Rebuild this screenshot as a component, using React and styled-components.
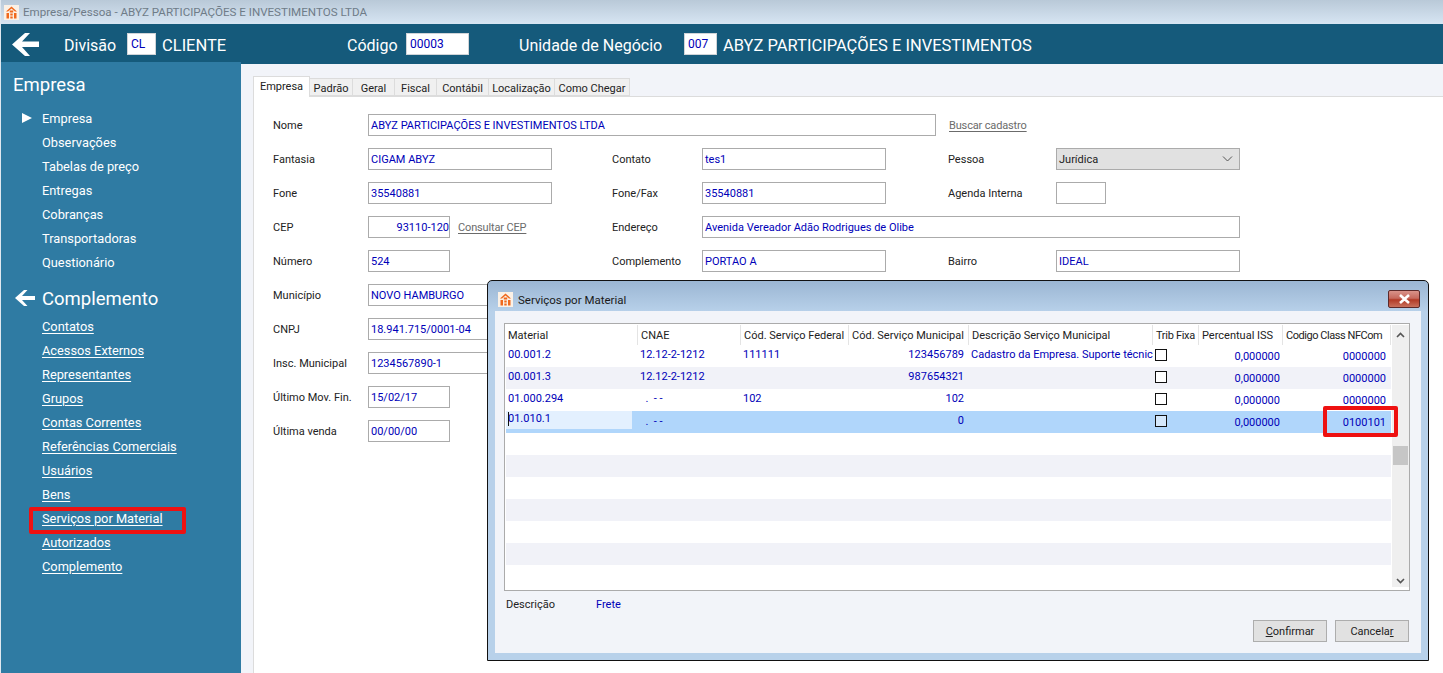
import React from 'react';
import styled, { createGlobalStyle } from 'styled-components';

const FONT = 'Roboto, "Noto Sans", sans-serif';
const BLUE_TEXT = '#0000b8';

const GlobalStyle = createGlobalStyle`
  html, body {
    margin: 0;
    padding: 0;
    background: #fff;
    overflow: hidden;
  }
  *, *::before, *::after { box-sizing: border-box; }
`;

const Screen = styled.div`
  position: relative;
  width: 1443px;
  height: 673px;
  overflow: hidden;
  border-left: 1px solid #dfe8f0;
  font-family: ${FONT};
  font-size: 11px;
  color: #222;
  background: #f2f4f9;
`;

const TitleBar = styled.div`
  height: 24px;
  display: flex;
  align-items: center;
  gap: 4px;
  padding-left: 3px;
  background: linear-gradient(#b9c9d8, #d7e5f3);
  color: #6f7c88;
  font-size: 11.6px;
`;

const HeaderBar = styled.div`
  height: 40px;
  display: flex;
  align-items: center;
  padding-left: 11px;
  background: #155a7b;
  color: #fff;
  font-size: 16.5px;
`;

const BackArrow = styled.svg`
  width: 27px;
  height: 23px;
  margin-right: 25px;
  fill: #fff;
`;

const HeaderGroup = styled.div`
  width: ${p => p.$width}px;
  display: flex;
  align-items: center;
  flex: none;
  white-space: nowrap;
`;

const HeaderLabel = styled.span`
  width: ${p => p.$width}px;
  padding-top: 2px;
  flex: none;
  font-size: 16px;
`;

const HeaderValue = styled.span`
  padding-top: 2px;
`;

const HeaderBox = styled.span`
  width: ${p => p.$width}px;
  height: 22px;
  margin-right: 6px;
  padding-left: 3px;
  flex: none;
  display: flex;
  align-items: center;
  background: #fff;
  border: 1px solid #d0d4d8;
  color: ${BLUE_TEXT};
  font-size: 12px;
`;

const Body = styled.div`
  display: flex;
  height: 609px;
`;

const Sidebar = styled.nav`
  position: relative;
  width: 240px;
  height: 611px;
  margin-top: -2px;
  padding-top: 10px;
  flex: none;
  background: #2f7ba3;
  color: #fff;
`;

const SideHeading = styled.div`
  height: 24px;
  margin: ${p => p.$margin};
  padding: 2px 0 0 ${p => p.$indent}px;
  display: flex;
  align-items: center;
  gap: 7px;
  font-size: 18.5px;

  svg { margin-top: -2px; }
`;

const SideItem = styled.div`
  position: relative;
  height: 24px;
  padding-left: 41px;
  display: flex;
  align-items: center;
  font-size: 12.8px;
  text-decoration: ${p => (p.$link ? 'underline' : 'none')};
  text-underline-offset: 2px;

  ${p => p.$highlight && `
    &::after {
      content: '';
      position: absolute;
      left: 28px;
      top: 1px;
      width: 157px;
      height: 27px;
      border: 4px solid #ee1111;
      border-radius: 2px;
    }
  `}
`;

const Pointer = styled.span`
  position: absolute;
  left: 21px;
  top: 7px;
  border-left: 10px solid #fff;
  border-top: 5px solid transparent;
  border-bottom: 5px solid transparent;
`;

const Main = styled.main`
  flex: 1;
  padding: 12px 0 0 12px;
`;

const Tabs = styled.div`
  height: 21px;
  display: flex;
  align-items: flex-end;
  border-bottom: 1px solid #dcdcdc;
`;

const Tab = styled.div`
  width: ${p => p.$width}px;
  height: ${p => (p.$active ? 21 : 18)}px;
  margin-bottom: ${p => (p.$active ? -1 : 0)}px;
  padding: 2px 0 ${p => (p.$active ? 3 : 0)}px;
  display: flex;
  align-items: center;
  justify-content: center;
  background: ${p => (p.$active ? '#fff' : '#f0f0f0')};
  border: 1px solid #dcdcdc;
  border-width: 1px 1px ${p => (p.$active ? 0 : 1)}px ${p => (p.$active ? 1 : 0)}px;
  white-space: nowrap;
`;

const Panel = styled.section`
  height: 576px;
  padding: 17px 0 0 19px;
  background: #fff;
  border-left: 1px solid #dcdcdc;
`;

const Form = styled.div`
  display: grid;
  grid-template-columns: 95px 184px 60px 90px 184px 62px 108px 184px;
  grid-auto-rows: 22px;
  row-gap: 12px;
  align-items: center;
`;

const Label = styled.span`
  grid-column: ${p => p.$column};
  white-space: nowrap;
`;

const FieldRow = styled.div`
  grid-column: ${p => p.$column};
  display: flex;
  align-items: center;
  gap: ${p => p.$gap}px;
`;

const Input = styled.div`
  grid-column: ${p => p.$column};
  width: ${p => (p.$width ? `${p.$width}px` : 'auto')};
  height: 22px;
  padding-left: 2px;
  flex: none;
  display: flex;
  align-items: center;
  justify-content: ${p => (p.$right ? 'flex-end' : 'flex-start')};
  background: #fff;
  border: 1px solid #ababab;
  color: ${BLUE_TEXT};
  white-space: nowrap;
`;

const Select = styled(Input)`
  justify-content: space-between;
  padding: 0 6px 0 2px;
  background: #e1e1e1;
  color: #222;
`;

const SideLink = styled.span`
  color: #6b6b6b;
  letter-spacing: -0.15px;
  text-decoration: underline;
  text-underline-offset: 2px;
  white-space: nowrap;
`;

const Dialog = styled.div`
  position: absolute;
  left: 486px;
  top: 280px;
  width: 942px;
  height: 381px;
  display: flex;
  flex-direction: column;
  border: 1px solid #111;
  border-radius: 5px 5px 0 0;
  background: linear-gradient(#9bb6d3 0, #b8d1ea 31px);
  padding: 0 7px 7px;
`;

const DialogTitle = styled.div`
  height: 30px;
  padding: 7px 0 0 3px;
  flex: none;
  display: flex;
  align-items: center;
  gap: 5px;
  color: #1a1a1a;
  font-size: 11.5px;
`;

const CloseButton = styled.div`
  width: 32px;
  height: 18px;
  margin: -2px 1px 0 auto;
  display: flex;
  align-items: center;
  justify-content: center;
  border: 1px solid #5c2a2a;
  border-radius: 2px;
  background: linear-gradient(#d9938a 0, #c66a5e 45%, #b23a26 55%, #c8705c 100%);
`;

const DialogContent = styled.div`
  flex: 1;
  display: flex;
  flex-direction: column;
  padding: 12px 11px 11px 9px;
  background: #f2f4f9;
`;

const GridFrame = styled.div`
  height: 268px;
  flex: none;
  display: flex;
  background: #fff;
  border: 1px solid #ababab;
  padding: 1px 0 3px 1px;
`;

const GridBody = styled.div`
  width: 885px;
  flex: none;
`;

const columns = '132px 103px 108px 120px 184px 46px 84px 108px';

const HeaderRow = styled.div`
  display: grid;
  grid-template-columns: ${columns};
  height: 20px;
  background: #fff;
`;

const HeaderCell = styled.div`
  padding-left: ${p => (p.$first ? 2 : 3)}px;
  display: flex;
  align-items: center;
  border-right: 1px solid #e4e4e4;
  letter-spacing: ${p => p.$spacing || 0}px;
  white-space: nowrap;
  overflow: hidden;
  color: #222;
`;

const Row = styled.div`
  display: grid;
  grid-template-columns: ${columns};
  height: 22px;
  background: ${p => (p.$selected ? '#b0d6fb' : p.$striped ? '#f1f2f8' : '#fff')};
  color: ${BLUE_TEXT};
`;

const Cell = styled.div`
  position: relative;
  z-index: ${p => (p.$flagged ? 2 : 'auto')};
  display: flex;
  padding: ${p => p.$top || 3}px ${p => p.$right || 0}px 0 ${p => (p.$right ? 0 : 2)}px;
  justify-content: ${p => (p.$right ? 'flex-end' : 'flex-start')};
  white-space: pre;
  overflow: ${p => (p.$flagged ? 'visible' : 'hidden')};

  ${p => p.$flagged && `
    &::after {
      content: '';
      position: absolute;
      left: 40px;
      top: -5px;
      width: 75px;
      height: 31px;
      border: 4px solid #ee1111;
      border-radius: 2px;
    }
  `}
`;

const EditCell = styled.div`
  position: relative;
  width: 126px;
  height: 18px;
  padding: 1px 0 0 2px;
  background: #e3f0fe;
  white-space: nowrap;

  &::before {
    content: '';
    position: absolute;
    left: 2px;
    top: 1px;
    width: 1px;
    height: 14px;
    background: #111;
  }
`;

const CheckCell = styled.div`
  padding: 4px 0 0 2px;
`;

const CheckBox = styled.span`
  display: block;
  width: 12px;
  height: 12px;
  border: 1px solid #111;
  background: ${p => (p.$selected ? '#d5e8fb' : '#fff')};
`;

const ScrollBar = styled.div`
  position: relative;
  flex: 1;
  background: #efefef;
  margin-left: 1px;
`;

const ScrollButton = styled.svg`
  position: absolute;
  left: 4px;
  top: ${p => p.$top}px;
  width: 9px;
  height: 6px;
  fill: none;
  stroke: #555;
  stroke-width: 1.6;
`;

const ScrollThumb = styled.div`
  position: absolute;
  left: 1px;
  top: 121px;
  width: 15px;
  height: 19px;
  background: #c6c6c6;
`;

const Description = styled.div`
  display: flex;
  padding: 7px 0 0 2px;
  height: 26px;
`;

const DescLabel = styled.span`
  width: 90px;
`;

const DescValue = styled.span`
  color: ${BLUE_TEXT};
`;

const Buttons = styled.div`
  display: flex;
  justify-content: flex-end;
  gap: 8px;
  margin-top: 3px;
  padding-right: 1px;
`;

const Button = styled.div`
  width: 74px;
  height: 22px;
  display: flex;
  align-items: center;
  justify-content: center;
  background: #e1e1e1;
  border: 1px solid #adadad;
  color: #222;

  u { text-underline-offset: 1px; }
`;

const Logo = () => (
  <svg width="15" height="15" viewBox="0 0 15 15">
    <rect width="15" height="15" fill="#fbf1e6" />
    <path
      d="M7.5 1.5 L2 6.5 H4 L7.5 3.6 L11 6.5 H13 Z M5.8 5.6 H9.2 V7.4 H5.8 Z M2.5 8 H5 V13.5 H2.5 Z M6.3 8.4 H8.7 V10.4 H6.3 Z M10 8 H12.5 V13.5 H10 Z M6.3 11.4 H8.7 V13.5 H6.3 Z"
      fill="#f0681c"
    />
  </svg>
);

const rows = [
  { material: '00.001.2', cnae: '12.12-2-1212', federal: '111111', municipal: '123456789', desc: 'Cadastro da Empresa. Suporte técnic', code: '0000000' },
  { material: '00.001.3', cnae: '12.12-2-1212', federal: '', municipal: '987654321', desc: '', code: '0000000' },
  { material: '01.000.294', cnae: '  .  - -', federal: '102', municipal: '102', desc: '', code: '0000000' },
  { material: '01.010.1', cnae: '  .  - -', federal: '', municipal: '0', desc: '', code: '0100101', selected: true },
];

const headers = [
  ['Material'],
  ['CNAE'],
  ['Cód. Serviço Federal'],
  ['Cód. Serviço Municipal'],
  ['Descrição Serviço Municipal'],
  ['Trib Fixa', -0.3],
  ['Percentual ISS'],
  ['Codigo Class NFCom', -0.45],
];

const empresaMenu = ['Empresa', 'Observações', 'Tabelas de preço', 'Entregas', 'Cobranças', 'Transportadoras', 'Questionário'];
const complementoMenu = ['Contatos', 'Acessos Externos', 'Representantes', 'Grupos', 'Contas Correntes', 'Referências Comerciais', 'Usuários', 'Bens', 'Serviços por Material', 'Autorizados', 'Complemento'];
const tabs = [['Empresa', 57], ['Padrão', 43], ['Geral', 42], ['Fiscal', 42], ['Contábil', 52], ['Localização', 66], ['Como Chegar', 75]];

const App = () => {
  return (
    <Screen>
      <GlobalStyle />
      <TitleBar>
        <Logo />
        Empresa/Pessoa - ABYZ PARTICIPAÇÕES E INVESTIMENTOS LTDA
      </TitleBar>

      <HeaderBar>
        <BackArrow viewBox="0 0 27 23">
          <path d="M0 11.5 L13 0 H18 L10 8.5 H27 V14 H10 L18 23 H13 Z" />
        </BackArrow>
        <HeaderGroup $width={283}>
          <HeaderLabel $width={63}>Divisão</HeaderLabel>
          <HeaderBox $width={29}>CL</HeaderBox>
          <HeaderValue>CLIENTE</HeaderValue>
        </HeaderGroup>
        <HeaderGroup $width={172}>
          <HeaderLabel $width={59}>Código</HeaderLabel>
          <HeaderBox $width={63}>00003</HeaderBox>
        </HeaderGroup>
        <HeaderGroup $width={600}>
          <HeaderLabel $width={165}>Unidade de Negócio</HeaderLabel>
          <HeaderBox $width={33}>007</HeaderBox>
          <HeaderValue>ABYZ PARTICIPAÇÕES E INVESTIMENTOS</HeaderValue>
        </HeaderGroup>
      </HeaderBar>

      <Body>
        <Sidebar>
          <SideHeading $indent={12} $margin="0 0 10px">Empresa</SideHeading>
          {empresaMenu.map((item, i) => (
            <SideItem key={item}>
              {i === 0 && <Pointer />}
              {item}
            </SideItem>
          ))}
          <SideHeading $indent={14} $margin="12px 0 4px">
            <svg width="20" height="16" viewBox="0 0 20 16" fill="#fff">
              <path d="M0 8 L9 0 H12.5 L7 6 H20 V10 H7 L12.5 16 H9 Z" />
            </svg>
            Complemento
          </SideHeading>
          {complementoMenu.map(item => (
            <SideItem key={item} $link $highlight={item === 'Serviços por Material'}>
              {item}
            </SideItem>
          ))}
        </Sidebar>

        <Main>
          <Tabs>
            {tabs.map(([name, width], i) => (
              <Tab key={name} $width={width} $active={i === 0}>{name}</Tab>
            ))}
          </Tabs>
          <Panel>
            <Form>
              <Label $column="1">Nome</Label>
              <FieldRow $column="2 / -1" $gap={13}>
                <Input $width={568}>ABYZ PARTICIPAÇÕES E INVESTIMENTOS LTDA</Input>
                <SideLink>Buscar cadastro</SideLink>
              </FieldRow>

              <Label $column="1">Fantasia</Label>
              <Input $column="2">CIGAM ABYZ</Input>
              <Label $column="4">Contato</Label>
              <Input $column="5">tes1</Input>
              <Label $column="7">Pessoa</Label>
              <Select $column="8">
                Jurídica
                <svg width="11" height="6" viewBox="0 0 11 6" fill="none" stroke="#555">
                  <path d="M1 0.5 L5.5 5 L10 0.5" />
                </svg>
              </Select>

              <Label $column="1">Fone</Label>
              <Input $column="2">35540881</Input>
              <Label $column="4">Fone/Fax</Label>
              <Input $column="5">35540881</Input>
              <Label $column="7">Agenda Interna</Label>
              <Input $column="8" $width={50} />

              <Label $column="1">CEP</Label>
              <FieldRow $column="2 / 4" $gap={8}>
                <Input $width={82} $right>93110-120</Input>
                <SideLink>Consultar CEP</SideLink>
              </FieldRow>
              <Label $column="4">Endereço</Label>
              <Input $column="5 / -1">Avenida Vereador Adão Rodrigues de Olibe</Input>

              <Label $column="1">Número</Label>
              <Input $column="2" $width={82}>524</Input>
              <Label $column="4">Complemento</Label>
              <Input $column="5">PORTAO A</Input>
              <Label $column="7">Bairro</Label>
              <Input $column="8">IDEAL</Input>

              <Label $column="1">Município</Label>
              <Input $column="2">NOVO HAMBURGO</Input>

              <Label $column="1">CNPJ</Label>
              <Input $column="2">18.941.715/0001-04</Input>

              <Label $column="1">Insc. Municipal</Label>
              <Input $column="2">1234567890-1</Input>

              <Label $column="1">Último Mov. Fin.</Label>
              <Input $column="2" $width={82}>15/02/17</Input>

              <Label $column="1">Última venda</Label>
              <Input $column="2" $width={82}>00/00/00</Input>
            </Form>
          </Panel>
        </Main>
      </Body>

      <Dialog>
        <DialogTitle>
          <Logo />
          Serviços por Material
          <CloseButton>
            <svg width="13" height="10" viewBox="0 0 13 10" fill="none" stroke="#fff" strokeWidth="2.6">
              <path d="M2 1 L11 9 M11 1 L2 9" />
            </svg>
          </CloseButton>
        </DialogTitle>
        <DialogContent>
          <GridFrame>
            <GridBody>
              <HeaderRow>
                {headers.map(([h, spacing], i) => (
                  <HeaderCell key={h} $first={i === 0} $spacing={spacing}>{h}</HeaderCell>
                ))}
              </HeaderRow>
              {rows.map((r, i) => (
                <Row key={r.material} $striped={i % 2 === 1} $selected={r.selected}>
                  {r.selected ? <EditCell>{r.material}</EditCell> : <Cell>{r.material}</Cell>}
                  <Cell $top={r.selected ? 4 : 3}>{r.cnae}</Cell>
                  <Cell>{r.federal}</Cell>
                  <Cell $right={5}>{r.municipal}</Cell>
                  <Cell>{r.desc}</Cell>
                  <CheckCell><CheckBox $selected={r.selected} /></CheckCell>
                  <Cell $right={3} $top={5}>0,000000</Cell>
                  <Cell $right={5} $top={5} $flagged={r.selected}>{r.code}</Cell>
                </Row>
              ))}
              {[0, 1, 2, 3, 4, 5, 6].map(i => (
                <Row key={i} $striped={i % 2 === 1} />
              ))}
            </GridBody>
            <ScrollBar>
              <ScrollButton $top={7} viewBox="0 0 9 6"><path d="M1 5 L4.5 1.5 L8 5" /></ScrollButton>
              <ScrollThumb />
              <ScrollButton $top={253} viewBox="0 0 9 6"><path d="M1 1 L4.5 4.5 L8 1" /></ScrollButton>
            </ScrollBar>
          </GridFrame>
          <Description>
            <DescLabel>Descrição</DescLabel>
            <DescValue>Frete</DescValue>
          </Description>
          <Buttons>
            <Button><span><u>C</u>onfirmar</span></Button>
            <Button><span>Cancela<u>r</u></span></Button>
          </Buttons>
        </DialogContent>
      </Dialog>
    </Screen>
  );
};

export default App;
